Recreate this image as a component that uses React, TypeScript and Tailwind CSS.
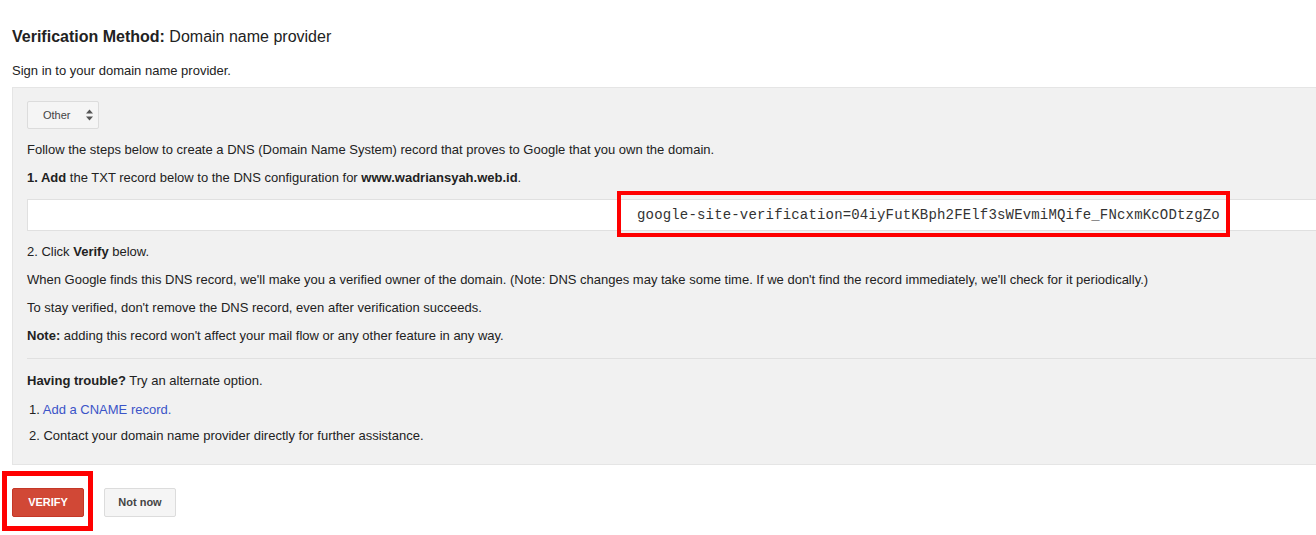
import React from 'react';

const SelectArrows: React.FC = () => (
  <svg width="7" height="12" viewBox="0 0 7 12" className="flex-shrink-0">
    <path d="M3.5 0.5 L7 4.5 L0 4.5 Z" fill="#555" />
    <path d="M3.5 11.5 L7 7.5 L0 7.5 Z" fill="#555" />
  </svg>
);

const App: React.FC = () => {
  return (
    <div
      className="w-[1316px] h-[535px] overflow-hidden bg-white text-[#222]"
      style={{ fontFamily: '"Liberation Sans", Arial, sans-serif' }}
    >
      <div className="pt-[27px] pl-3">
        <h2 className="text-[16px] leading-[20px]">
          <span className="font-bold">Verification Method:</span> Domain name provider
        </h2>
        <p className="mt-[15px] text-[13px] leading-[18px]">Sign in to your domain name provider.</p>

        <div className="mt-[7px] bg-[#f1f1f1] border border-r-0 border-[#e5e5e5] pl-[14px] pt-[13px] pb-[19px] text-[13px] leading-[18px]">
          <div className="flex items-center gap-[15px] w-[72px] h-[28px] pl-[15px] bg-[#f5f5f5] border border-[#dcdcdc] rounded-[2px] text-[11px] text-[#444]">
            <span>Other</span>
            <SelectArrows />
          </div>

          <p className="mt-[12px]">
            Follow the steps below to create a DNS (Domain Name System) record that proves to Google that you own the domain.
          </p>
          <p className="mt-[10px]">
            <span className="font-bold">1. Add</span> the TXT record below to the DNS configuration for{' '}
            <span className="font-bold">www.wadriansyah.web.id</span>.
          </p>

          <div className="mt-[12px] h-[32px] bg-white border border-r-0 border-[#e0e0e0] flex items-center pl-[609px]">
            <div className="relative">
              <span
                className="text-[14px] tracking-[0.17px] text-[#333] whitespace-nowrap"
                style={{ fontFamily: '"Liberation Mono", "Courier New", monospace' }}
              >
                google-site-verification=04iyFutKBph2FElf3sWEvmiMQife_FNcxmKcODtzgZo
              </span>
              <div className="absolute -left-[20px] -right-[10px] -top-[15px] -bottom-[13px] border-[4px] border-[#ff0000]" />
            </div>
          </div>

          <p className="mt-[12px]">
            2. Click <span className="font-bold">Verify</span> below.
          </p>
          <p className="mt-[10px]">
            When Google finds this DNS record, we'll make you a verified owner of the domain. (Note: DNS changes may take some time. If we don't find the record immediately, we'll check for it periodically.)
          </p>
          <p className="mt-[10px]">To stay verified, don't remove the DNS record, even after verification succeeds.</p>
          <p className="mt-[10px]">
            <span className="font-bold">Note:</span> adding this record won't affect your mail flow or any other feature in any way.
          </p>

          <div className="mt-[13px] border-t border-[#e0e0e0]" />

          <p className="mt-[13px]">
            <span className="font-bold">Having trouble?</span> Try an alternate option.
          </p>
          <ol className="mt-[11px] pl-[2px]">
            <li>
              1. <span className="text-[#3b54c8]">Add a CNAME record.</span>
            </li>
            <li className="mt-[8px]">2. Contact your domain name provider directly for further assistance.</li>
          </ol>
        </div>

        <div className="mt-[23px] flex items-center gap-5">
          <div className="relative">
            <button className="w-[72px] h-[29px] bg-[#d14836] border border-[#c53727] rounded-[2px] text-white text-[11px] font-bold">
              VERIFY
            </button>
            <div className="absolute -left-[10px] -right-[9px] -top-[17px] -bottom-[14px] border-[5px] border-[#ff0000]" />
          </div>
          <button className="w-[72px] h-[29px] bg-[#f5f5f5] border border-[#dcdcdc] rounded-[2px] text-[#444] text-[11px] font-bold">
            Not now
          </button>
        </div>
      </div>
    </div>
  );
};

export default App;
